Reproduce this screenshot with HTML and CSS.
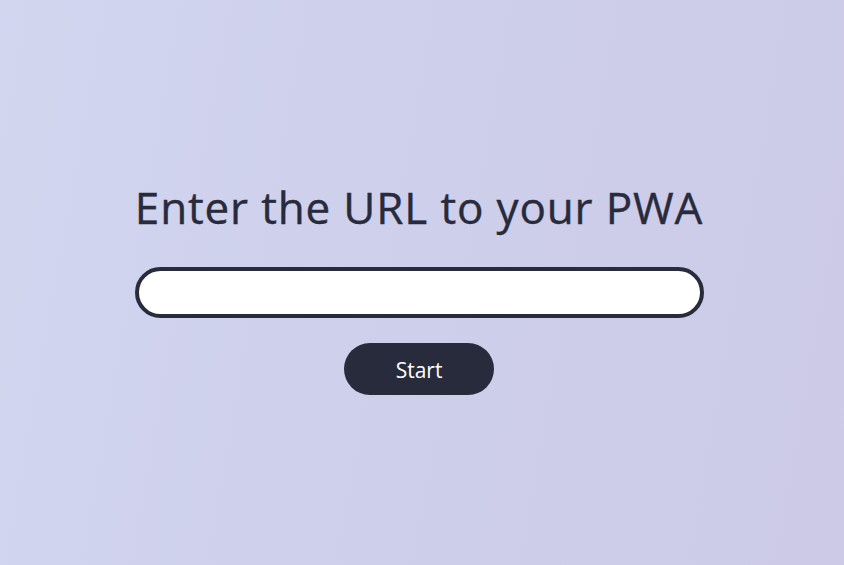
FILE: index.html
```html
<!DOCTYPE html>
<html>
<head>
<meta charset="utf-8">
<link rel="stylesheet" href="styles.css">
</head>
<body>
<main class="page">
  <h1 class="title">Enter the URL to your PWA</h1>
  <input class="url-input" type="text" aria-label="PWA URL">
  <button class="start-btn">Start</button>
</main>
</body>
</html>
```
FILE: styles.css
```css
html, body {
  margin: 0;
  height: 100%;
}
body {
  background: linear-gradient(100deg, #d2d6ef 0%, #cecfeb 50%, #cccae7 100%);
  font-family: "Open Sans", "Noto Sans", sans-serif;
  color: #282b3b;
}
.page {
  height: 100%;
  display: flex;
  flex-direction: column;
  align-items: center;
  justify-content: center;
  padding: 8px 6px 0 0;
  box-sizing: border-box;
}
.title {
  margin: 0;
  font-size: 44px;
  font-weight: 400;
  line-height: 56px;
  letter-spacing: 0.85px;
  -webkit-text-stroke: 0.4px #282b3b;
}
.url-input {
  margin-top: 32px;
  width: 569px;
  height: 51px;
  box-sizing: border-box;
  border: 4px solid #282b3b;
  border-radius: 26px;
  background: #fff;
  outline: none;
  padding: 0 20px;
  font-size: 18px;
}
.start-btn {
  margin-top: 25px;
  width: 150px;
  height: 52px;
  border: none;
  border-radius: 26px;
  background: #282b3b;
  color: #fff;
  font-family: inherit;
  font-size: 21px;
  padding: 2px 0 0;
  cursor: pointer;
}
```
